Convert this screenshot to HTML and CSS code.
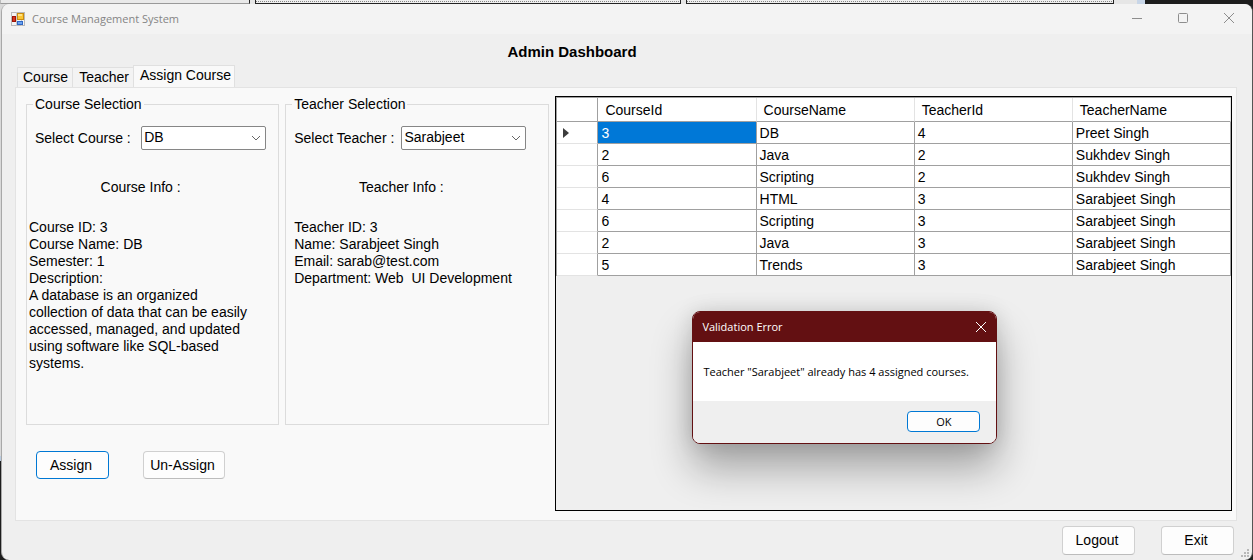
FILE: index.html
```html
<!DOCTYPE html>
<html lang="en">
<head>
<meta charset="utf-8">
<title>Course Management System</title>
<link rel="stylesheet" href="styles.css">
</head>
<body>
<div class="desktop-top"><i class="pane pane-a"></i><i class="pane pane-b"></i><i class="pane pane-c"></i><i class="pane-end"></i></div>
<div class="window">
  <header class="titlebar">
    <svg class="app-icon" viewBox="0 0 14 14" width="14" height="14">
      <rect x="0.5" y="0.5" width="13" height="13" fill="#f4f4f4" stroke="#b9b9b9"/>
      <path d="M0 4.500h6M5.500 0v14M10.500 8v6" stroke="#c8c8c8" fill="none"/>
      <rect x="6.500" y="1.500" width="6" height="6" fill="#fbc633" stroke="#c98c10"/>
      <rect x="7" y="2" width="4" height="2" fill="#ffe384"/>
      <rect x="1.500" y="4.500" width="3" height="5" fill="#d6321c" stroke="#9c1408"/>
      <rect x="6.500" y="9.500" width="5" height="3" fill="#6ba4f0" stroke="#2f66c4"/>
    </svg>
    <span class="window-title">Course Management System</span>
    <div class="window-buttons">
      <button class="wbtn" type="button" aria-label="Minimize"><svg width="12" height="12" viewBox="0 0 12 12"><path d="M1 5.500h10"/></svg></button>
      <button class="wbtn" type="button" aria-label="Maximize"><svg width="12" height="12" viewBox="0 0 12 12"><rect x="1.500" y="0.500" width="9" height="9" rx="1"/></svg></button>
      <button class="wbtn" type="button" aria-label="Close"><svg width="12" height="12" viewBox="0 0 12 12"><path d="M1 0l10 10M11 0L1 10"/></svg></button>
    </div>
  </header>
  <h1 class="heading">Admin Dashboard</h1>
  <nav class="tabs" role="tablist">
    <button class="tab" type="button" role="tab">Course</button>
    <button class="tab" type="button" role="tab">Teacher</button>
    <button class="tab active" type="button" role="tab" aria-selected="true">Assign Course</button>
  </nav>
  <main class="panel">
    <section class="left">
      <div class="groups">
        <fieldset class="group">
          <legend>Course Selection</legend>
          <div class="field"><label for="course">Select Course :</label>
            <select id="course" class="combo"><option>DB</option><option>Java</option><option>Scripting</option></select></div>
          <p class="info-title">Course Info :</p>
          <div class="info">Course ID: 3<br>Course Name: DB<br>Semester: 1<br>Description:<br>A database is an organized collection of data that can be easily accessed, managed, and updated using software like SQL-based systems.</div>
        </fieldset>
        <fieldset class="group teacher">
          <legend>Teacher Selection</legend>
          <div class="field"><label for="teacher">Select Teacher :</label>
            <select id="teacher" class="combo"><option>Sarabjeet</option><option>Sukhdev</option><option>Preet</option></select></div>
          <p class="info-title">Teacher Info :</p>
          <div class="info">Teacher ID: 3<br>Name: Sarabjeet Singh<br>Email: sarab@test.com<br>Department: Web&nbsp; UI Development</div>
        </fieldset>
      </div>
      <div class="actions">
        <button class="btn primary" type="button">Assign</button>
        <button class="btn wide" type="button">Un-Assign</button>
      </div>
    </section>
    <section class="grid">
      <table>
        <thead><tr><th class="rh"></th><th>CourseId</th><th>CourseName</th><th>TeacherId</th><th>TeacherName</th></tr></thead>
        <tbody>
          <tr><td class="rh"><svg width="6" height="10" viewBox="0 0 6 10"><path d="M0 0l6 5-6 5z" fill="#3c3c3c"/></svg></td><td class="selected">3</td><td>DB</td><td>4</td><td>Preet Singh</td></tr>
          <tr><td class="rh"></td><td>2</td><td>Java</td><td>2</td><td>Sukhdev Singh</td></tr>
          <tr><td class="rh"></td><td>6</td><td>Scripting</td><td>2</td><td>Sukhdev Singh</td></tr>
          <tr><td class="rh"></td><td>4</td><td>HTML</td><td>3</td><td>Sarabjeet Singh</td></tr>
          <tr><td class="rh"></td><td>6</td><td>Scripting</td><td>3</td><td>Sarabjeet Singh</td></tr>
          <tr><td class="rh"></td><td>2</td><td>Java</td><td>3</td><td>Sarabjeet Singh</td></tr>
          <tr><td class="rh"></td><td>5</td><td>Trends</td><td>3</td><td>Sarabjeet Singh</td></tr>
        </tbody>
      </table>
      <div class="dialog" role="dialog" aria-labelledby="dlg-title">
        <div class="dialog-bar"><span id="dlg-title">Validation Error</span>
          <button class="dialog-close" type="button" aria-label="Close"><svg width="12" height="12" viewBox="0 0 12 12"><path d="M1 1l10 10M11 1L1 11"/></svg></button></div>
        <p class="dialog-text">Teacher "Sarabjeet" already has 4 assigned courses.</p>
        <div class="dialog-foot"><button class="ok" type="button">OK</button></div>
      </div>
    </section>
  </main>
  <footer class="footer">
    <button class="btn" type="button">Logout</button>
    <button class="btn" type="button">Exit</button>
  </footer>
  <svg class="grip" width="12" height="12" viewBox="0 0 12 12" fill="#b8b8b8"><path d="M7 1h2v2H7zM4 4h2v2H4zM7 4h2v2H7zM1 7h2v2H1zM4 7h2v2H4zM7 7h2v2H7z"/></svg>
</div>
</body>
</html>
```

FILE: styles.css
```css
* { box-sizing: border-box; }
body {
  margin: 0;
  min-height: 100vh;
  display: flex;
  flex-direction: column;
  background: linear-gradient(to bottom, #1d1d1d 0 40px, transparent 40px) right top / 20px 100% no-repeat, linear-gradient(to bottom, #d9d9d9 0 456px, #b9cbe0 456px 461px, #1d1d1d 461px);
  font: 14px/17px "Liberation Sans", Arial, sans-serif;
  color: #000;
}
button, select { font: inherit; color: inherit; }
.desktop-top { display: flex; height: 4px; background: #e6e6e6; }
.pane { height: 4px; border: 1px solid #222; border-top: 0; background: repeating-linear-gradient(to right, #888 0 1px, #eee 1px 2px) 0 1px / 100% 1px no-repeat #eee; margin-right: 5px; }
.pane-a { flex: 249; border-color: #bbb #222 #999 #bbb; background: #e9e9e9; }
.pane-b { flex: 427; }
.pane-c { flex: 428; }
.pane-end { width: 134px; background: linear-gradient(to right, #e6e6e6 0 18px, #c8d6e8 18px 26px, #1d1d1d 26px); }
.window {
  position: relative;
  flex: 1;
  display: flex;
  flex-direction: column;
  margin-left: 1px;
  padding-bottom: 5px;
  border-left: 1px solid #a8a8a8;
  border-right: 1px solid #555;
  border-radius: 8px;
  background: #efefef;
}
.titlebar { display: flex; align-items: center; height: 30px; padding-left: 9px; background: #f3f3f3; border-radius: 8px 8px 0 0; font: 11px/16px "Open Sans", sans-serif; color: #858585; }
.window-title { margin-left: 7px; }
.window-buttons { display: flex; margin-left: auto; }
.wbtn { display: grid; place-items: center; width: 46px; height: 28px; padding: 0; border: 0; background: none; }
.wbtn svg, .dialog-close svg { fill: none; stroke: #8d8d8d; }
.heading { margin: 9px 110px 4px 0; font-size: 15px; line-height: 18px; text-align: center; }
.tabs { display: flex; align-items: flex-end; height: 22px; padding-left: 15px; }
.tab { height: 20px; padding: 0 4px 0 5px; border: 1px solid #e0e0e0; border-width: 1px 0 0 1px; background: #f3f3f3; }
.tab + .tab { padding: 0 4px 0 6px; }
.tab.active { height: 22px; padding: 0 3px 2px 6px; border-width: 1px 1px 0; background: #f9f9f9; }
.panel { flex: 1; display: flex; gap: 6px; margin: 0 15px 0 13px; padding: 8px 4px 9px 10px; border: 1px solid #e3e3e3; background: #f9f9f9; }
.left { display: flex; flex-direction: column; width: 43.4%; }
.groups { display: grid; grid-template-columns: 253fr 264fr; gap: 6px; height: 329px; }
.group { min-width: 0; margin: 0; padding: 0 2px; border: 1px solid #dcdcdc; }
.teacher { padding-left: 8px; }
legend { margin-left: 4px; padding: 0 2px; }
.teacher legend { margin-left: -2px; }
.field { display: flex; align-items: center; justify-content: space-between; margin-top: 13px; padding: 0 10px 0 6px; }
.teacher .field { padding: 0 20px 0 0; }
.combo {
  appearance: none;
  width: 125px;
  height: 24px;
  padding: 0 20px 1px 2px;
  border: 1px solid #868686;
  border-radius: 2px;
  background: #fff url("data:image/svg+xml,%3Csvg xmlns='http://www.w3.org/2000/svg' width='10' height='6'%3E%3Cpath d='M1 1l4 4 4-4' fill='none' stroke='%23666'/%3E%3C/svg%3E") no-repeat right 4px center;
}
.info-title { margin: 29px 24px 23px 0; text-align: center; }
.teacher .info-title { margin-right: 38px; }
.info { width: 230px; }
.actions { display: flex; gap: 34px; padding: 26px 0 0 10px; }
.btn { width: 73px; height: 28px; padding: 0 3px 0 0; border: 1px solid #d0d0d0; border-bottom-color: #bcbcbc; border-radius: 4px; background: #fdfdfd; }
.btn.wide { width: 82px; }
.btn.primary { border-color: #0078d4; }
.grid { position: relative; flex: 1; border: 1px solid #000; background: #efefef; }
table { width: 100%; table-layout: fixed; border-collapse: separate; border-spacing: 0; border-top: 1px solid #a0a0a0; border-left: 1px solid #a0a0a0; background: #fff; }
th { height: 24px; padding: 2px 0 0 7px; border-right: 1px solid #e3e3e3; border-bottom: 1px solid #a0a0a0; font-weight: 400; text-align: left; }
td { height: 22px; padding: 1px 0 0 3px; border-right: 1px solid #a0a0a0; border-bottom: 1px solid #a0a0a0; }
th.rh, td.rh { width: 41px; border-right-color: #a0a0a0; }
td.rh { padding: 0 0 0 6px; border-bottom-color: #e3e3e3; line-height: 0; }
td.selected { background: #0078d7; color: #fff; }
.dialog {
  position: absolute;
  top: 214px;
  left: 136px;
  width: 305px;
  border: 1px solid #631012;
  border-radius: 8px;
  background: #fff;
  overflow: hidden;
  box-shadow: 0 24px 40px rgba(0, 0, 0, .32), 0 0 20px rgba(0, 0, 0, .12);
  font: 11px/16px "Open Sans", sans-serif;
}
.dialog-bar { display: flex; align-items: center; justify-content: space-between; height: 30px; padding: 0 9px; background: #631012; color: #fff; }
.dialog-close { display: grid; padding: 0; border: 0; background: none; }
.dialog-close svg { stroke: #fff; }
.dialog-text { margin: 0; padding: 22px 10px 21px; }
.dialog-foot { display: flex; justify-content: flex-end; padding: 10px 16px 11px; background: #efefef; }
.ok { width: 73px; height: 21px; padding: 0; border: 1px solid #0078d4; border-radius: 4px; background: #fdfdfd; }
.footer { display: flex; justify-content: flex-end; gap: 26px; padding: 5px 18px 0 0; }
.footer .btn { height: 29px; }
.grip { position: absolute; right: 0; bottom: 0; }
```
